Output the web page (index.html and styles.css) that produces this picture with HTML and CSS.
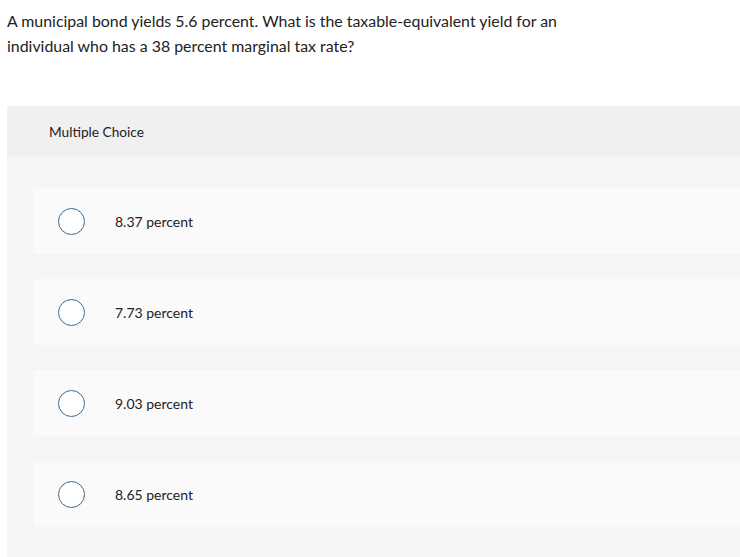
FILE: index.html
```html
<!DOCTYPE html>
<html>
<head>
<meta charset="utf-8">
<link rel="stylesheet" href="styles.css">
</head>
<body>
<div class="page">
  <p class="question">A municipal bond yields 5.6 percent. What is the taxable-equivalent yield for an individual who has a 38 percent marginal tax rate?</p>
  <div class="panel">
    <div class="panel-head">Multiple Choice</div>
    <div class="options">
      <div class="option"><span class="radio"></span><span class="label">8.37 percent</span></div>
      <div class="option"><span class="radio"></span><span class="label">7.73 percent</span></div>
      <div class="option"><span class="radio"></span><span class="label">9.03 percent</span></div>
      <div class="option"><span class="radio"></span><span class="label">8.65 percent</span></div>
    </div>
  </div>
</div>
</body>
</html>
```
FILE: styles.css
```css
html, body {
  margin: 0;
  background: #ffffff;
}
body {
  font-family: Lato, "Liberation Sans", sans-serif;
  color: #222222;
}
.page {
  padding: 8px 0 0 7px;
}
.question {
  margin: 0;
  width: 580px;
  font-size: 15.9px;
  line-height: 25px;
  color: #222;
}
.panel {
  margin-top: 48px;
  background: #f5f5f5;
  padding-bottom: 30px;
}
.panel-head {
  height: 50px;
  background: #f0f0f0;
  display: flex;
  align-items: center;
  padding-left: 42px;
  font-size: 13.7px;
  color: #222;
}
.options {
  padding: 32px 0 0 26px;
  display: flex;
  flex-direction: column;
  gap: 25px;
}
.option {
  height: 66px;
  background: #fafafa;
  border-radius: 3px 0 0 3px;
  display: flex;
  align-items: center;
  padding-left: 25px;
}
.radio {
  width: 25px;
  height: 25px;
  border: 1.5px solid #3d6990;
  border-radius: 50%;
  background: #fff;
  flex: none;
}
.label {
  margin-left: 30px;
  font-size: 14px;
  color: #222;
}
```
